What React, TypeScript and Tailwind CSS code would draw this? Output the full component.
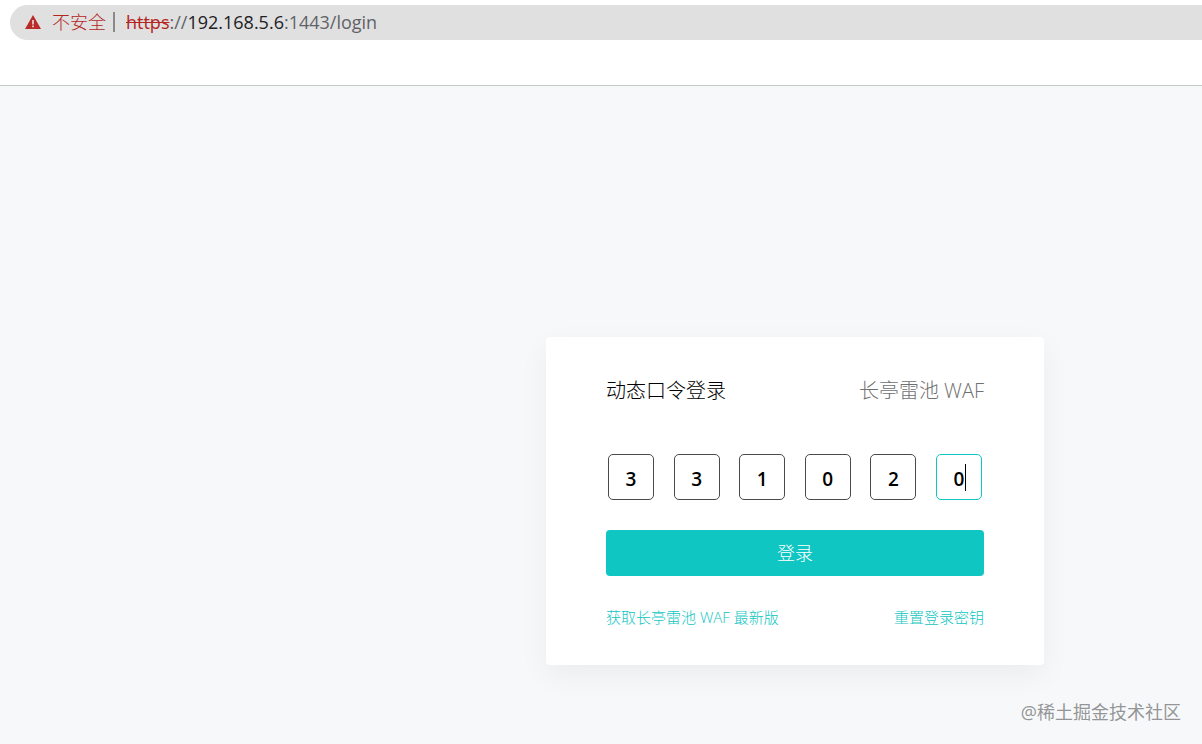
import React, { useState } from 'react';

const DIGITS = ['3', '3', '1', '0', '2', '0'];

const AddressBar: React.FC = () => (
    <header className="border-b border-[#c5c9c8] bg-white pt-[5px] pb-[45px]">
        <div className="ml-[10px] flex h-[35px] items-center rounded-l-full bg-[#e0e0e0] pb-[2px] pl-[15px] text-lg leading-6">
            <svg viewBox="0 0 16 14" className="h-[14px] w-4 shrink-0" aria-hidden="true">
                <path d="M8 0 L16 14 H0 Z" fill="#b92b27" />
                <path d="M7.2 5 H8.8 V9.4 H7.2 Z M7.2 10.6 H8.8 V12.2 H7.2 Z" fill="#e9dede" />
            </svg>
            <span className="ml-[11px] font-light text-[#b3261e]">不安全</span>
            <span className="ml-[7px] h-5 w-[2px] bg-[#8a8a8a]" />
            <span className="ml-[11px] text-[#5f6368]">
                <span className="text-[#b3261e] line-through">https</span>://
                <span className="text-[#202124]">192.168.5.6</span>:1443/login
            </span>
        </div>
    </header>
);

interface CodeInputProps {
    values: string[];
    activeIndex: number;
    onChange: (index: number, value: string) => void;
}

const CodeInput: React.FC<CodeInputProps> = ({ values, activeIndex, onChange }) => (
    <div className="mt-12 flex justify-between px-[2px]">
        {values.map((value, index) => {
            const isActive = index === activeIndex;
            return (
                <div key={index} className="relative">
                    <input
                        type="text"
                        inputMode="numeric"
                        maxLength={1}
                        aria-label={`口令第 ${index + 1} 位`}
                        value={value}
                        onChange={e => onChange(index, e.target.value)}
                        className={`block size-[46px] rounded-[5px] border bg-white pt-1 text-center text-[19px] font-semibold text-black caret-transparent outline-none ${isActive ? 'border-[#0fc6c2]' : 'border-[#4a4a4a]'}`}
                    />
                    {isActive && <span className="pointer-events-none absolute top-[10px] left-[29px] h-[27px] w-px bg-black" />}
                </div>
            );
        })}
    </div>
);

const App: React.FC = () => {
    const [values, setValues] = useState(DIGITS);

    const handleChange = (index: number, value: string) => {
        setValues(values.map((v, i) => (i === index ? value : v)));
    };

    return (
        <div className="flex min-h-screen flex-col bg-[#f6f8fa] font-['Open_Sans','Noto_Sans_CJK_SC',sans-serif]">
            <AddressBar />
            <main className="flex grow flex-col items-end pt-[251px]">
                <form
                    onSubmit={e => e.preventDefault()}
                    className="mr-[158px] w-full max-w-[498px] rounded bg-white px-[60px] pt-[39px] pb-9 font-light shadow-[0_10px_30px_rgba(0,0,0,0.05)]"
                >
                    <div className="flex items-center justify-between text-xl leading-[30px]">
                        <h1 className="font-light text-black">动态口令登录</h1>
                        <span className="text-[#707070]">长亭雷池 WAF</span>
                    </div>
                    <CodeInput values={values} activeIndex={5} onChange={handleChange} />
                    <button type="submit" className="mt-[30px] block h-[46px] w-full rounded bg-[#0fc6c2] text-lg text-white">
                        登录
                    </button>
                    <div className="mt-[29px] flex items-center justify-between text-[15px] leading-6 text-[#0fc6c2]">
                        <a href="#latest">获取长亭雷池 WAF 最新版</a>
                        <a href="#reset">重置登录密钥</a>
                    </div>
                </form>
                <footer className="mt-auto pr-[21px] pb-[18px] text-lg leading-7 text-[#939597] [text-shadow:0_0_2px_white]">
                    @稀土掘金技术社区
                </footer>
            </main>
        </div>
    );
};

export default App;
